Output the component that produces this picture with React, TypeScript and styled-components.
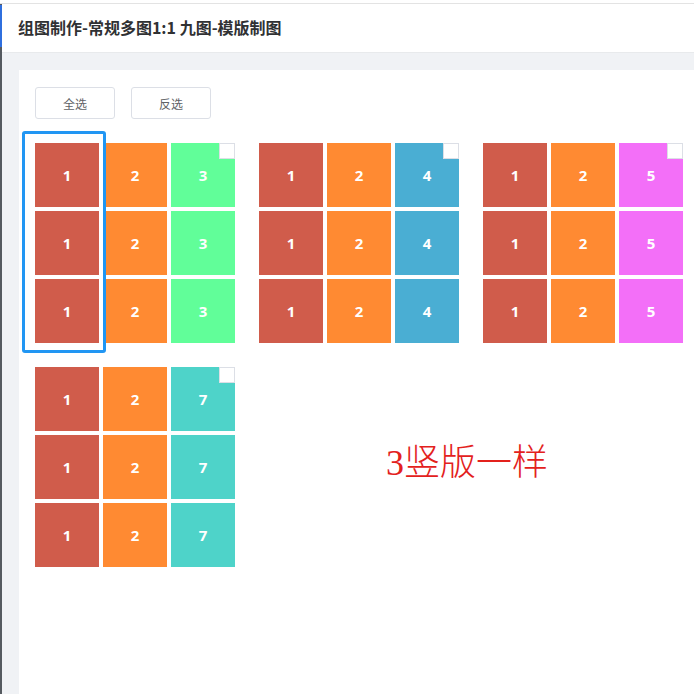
import styled, { createGlobalStyle } from 'styled-components';

const GlobalStyle = createGlobalStyle`
  html, body {
    margin: 0;
    padding: 0;
    height: 100%;
    overflow: hidden;
    background: #ffffff;
    font-family: "Noto Sans", "Noto Sans CJK SC", sans-serif;
  }
  #root {
    height: 100%;
  }
`;

type Tile = { label: string; color: string };

const RED = '#d05c4b';
const ORANGE = '#ff8a32';

const groups: { third: Tile; selected?: boolean }[] = [
  { third: { label: '3', color: '#61fe99' }, selected: true },
  { third: { label: '4', color: '#4aaed3' } },
  { third: { label: '5', color: '#f36ff8' } },
  { third: { label: '7', color: '#4ed3c9' } },
];

const App: React.FC = () => {
  return (
    <>
      <GlobalStyle />
      <Page>
        <TopLine />
        <Body>
          <Edge>
            <EdgeAccent />
          </Edge>
          <Main>
            <Header>
              <Title>组图制作-常规多图1:1 九图-模版制图</Title>
            </Header>
            <Content>
              <Card>
                <Toolbar>
                  <Button>全选</Button>
                  <Button>反选</Button>
                </Toolbar>
                <Groups>
                  {groups.map((g, idx) => (
                    <Group key={`group-${idx}`}>
                      {[0, 1, 2].map((row) =>
                        [
                          { label: '1', color: RED },
                          { label: '2', color: ORANGE },
                          g.third,
                        ].map((t, col) => (
                          <Cell key={`c-${row}-${col}`} $color={t.color}>
                            {t.label}
                            {row === 0 && col === 2 && <Check />}
                          </Cell>
                        ))
                      )}
                      {g.selected && <SelectFrame />}
                    </Group>
                  ))}
                  <Note>3竖版一样</Note>
                </Groups>
              </Card>
            </Content>
          </Main>
        </Body>
      </Page>
    </>
  );
};

const Page = styled.div`
  display: flex;
  flex-direction: column;
  height: 100%;
`;

const TopLine = styled.div`
  height: 3px;
  flex-shrink: 0;
  border-bottom: 1px solid #e3e3e3;
  background: #ffffff;
`;

const Body = styled.div`
  flex: 1;
  display: flex;
  min-height: 0;
`;

const Edge = styled.div`
  width: 2px;
  flex-shrink: 0;
  background: #555a60;
  padding-top: 1px;
`;

const EdgeAccent = styled.div`
  height: 42px;
  background: #2f6fde;
`;

const Main = styled.div`
  flex: 1;
  display: flex;
  flex-direction: column;
  min-width: 0;
`;

const Header = styled.div`
  height: 48px;
  flex-shrink: 0;
  display: flex;
  align-items: center;
  padding-left: 16px;
  background: #ffffff;
  border-bottom: 1px solid #e8eaec;
`;

const Title = styled.div`
  font-family: "Noto Sans CJK SC", sans-serif;
  font-size: 16px;
  font-weight: 700;
  color: #303133;
  margin-top: -2px;
`;

const Content = styled.div`
  flex: 1;
  display: flex;
  background: #f0f2f5;
  padding: 17px 0 0 17px;
  min-height: 0;
`;

const Card = styled.div`
  flex: 1;
  background: #ffffff;
  padding: 17px 0 0 16px;
`;

const Toolbar = styled.div`
  display: flex;
  gap: 16px;
  margin-bottom: 24px;
`;

const Button = styled.div`
  width: 78px;
  height: 30px;
  display: flex;
  align-items: center;
  justify-content: center;
  border: 1px solid #dcdfe6;
  border-radius: 3px;
  font-family: "Noto Sans CJK SC", sans-serif;
  font-size: 12px;
  color: #606266;
  background: #ffffff;
`;

const Groups = styled.div`
  display: grid;
  grid-template-columns: repeat(3, 200px);
  gap: 24px;
`;

const Group = styled.div`
  position: relative;
  display: grid;
  grid-template-columns: repeat(3, 64px);
  grid-auto-rows: 64px;
  gap: 4px;
`;

const Cell = styled.div<{ $color: string }>`
  position: relative;
  display: flex;
  align-items: center;
  justify-content: center;
  background: ${(p) => p.$color};
  color: #ffffff;
  font-family: "Noto Sans", sans-serif;
  font-size: 15px;
  font-weight: 700;
`;

const Check = styled.span`
  position: absolute;
  top: 0;
  right: 0;
  width: 14px;
  height: 14px;
  background: #ffffff;
  border: 1px solid #dcdfe6;
`;

const SelectFrame = styled.div`
  position: absolute;
  left: -13px;
  top: -12px;
  width: 78px;
  height: 216px;
  border: 3px solid #2196f3;
  border-radius: 3px;
  pointer-events: none;
`;

const Note = styled.div`
  grid-column: 2 / span 2;
  display: flex;
  align-items: center;
  justify-content: center;
  padding: 0 8px 16px 0;
  font-family: "Liberation Serif", "Noto Sans CJK SC", serif;
  font-size: 36px;
  font-weight: 300;
  color: #e3211c;
`;

export default App;
